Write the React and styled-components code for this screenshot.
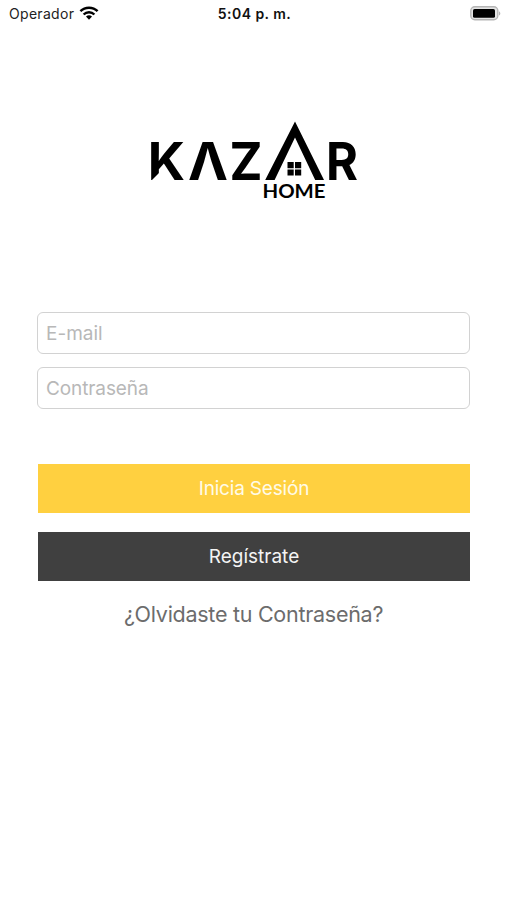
import React from 'react'
import styled, { createGlobalStyle } from 'styled-components'

const colors = {
    yellow: '#ffd040',
    dark: '#404040',
    border: '#d2d2d2',
    placeholder: '#b8b8b8',
    link: '#6c6c6c',
}

const GlobalStyle = createGlobalStyle`
    * {
        box-sizing: border-box;
    }
    body {
        margin: 0;
        background: #fff;
        font-family: Inter, 'Liberation Sans', sans-serif;
    }
`

const Screen = styled.main`
    display: flex;
    flex-direction: column;
    height: 900px;
`

const StatusBar = styled.header`
    display: grid;
    grid-template-columns: 1fr auto 1fr;
    align-items: center;
    height: 26px;
    padding: 0 6px 0 9px;
    color: #111;
    font-size: 14px;
`

const Carrier = styled.div`
    display: flex;
    align-items: center;
    gap: 5px;
    color: #222;
    letter-spacing: 0.3px;
`

const Time = styled.div`
    margin-right: 1px;
    font-weight: 600;
    letter-spacing: 0.45px;
`

const BatterySlot = styled.div`
    display: flex;
    justify-content: flex-end;
`

const LogoArea = styled.div`
    display: flex;
    justify-content: center;
    height: 286px;
    padding-top: 90px;
`

const LogoText = styled.text`
    font-family: ${({ family = 'Inter' }) => family}, sans-serif;
    font-weight: ${({ weight = 700 }) => weight};
    font-size: ${({ size = 52.5 }) => size}px;
`

const Form = styled.form`
    display: flex;
    flex-direction: column;
    padding: 0 37px;
`

const Field = styled.input`
    height: 42px;
    margin-bottom: 13px;
    padding: 0 8px;
    border: 1.5px solid ${colors.border};
    border-radius: 6px;
    outline: none;
    background: #fff;
    font-family: inherit;
    font-size: 19px;
    letter-spacing: ${({ $spacing = 0 }) => $spacing}px;
    &::placeholder {
        color: ${colors.placeholder};
        opacity: 1;
    }
`

const Button = styled.button`
    height: 49px;
    margin: ${({ $top }) => $top}px 0 0 1px;
    padding: 0;
    border: 0;
    background: ${({ $background }) => $background};
    color: ${({ $color }) => $color};
    font-family: inherit;
    font-size: 19px;
    letter-spacing: ${({ $spacing = 0 }) => $spacing}px;
`

const ForgotLink = styled.a`
    margin-top: 19px;
    color: ${colors.link};
    font-size: 21.5px;
    line-height: 28px;
    text-align: center;
    letter-spacing: -0.27px;
`

const Wifi = () => (
    <svg width="20" height="14" viewBox="0 0 20 14" fill="none" stroke="#000" strokeWidth="2.4">
        <path d="M1.4 5.2a12.3 12.3 0 0 1 17.2 0" />
        <path d="M4.6 8.5a7.7 7.7 0 0 1 10.8 0" />
        <path d="M7 10.6a4.3 4.3 0 0 1 6 0L10 13.7z" fill="#000" stroke="none" />
    </svg>
)

const Battery = () => (
    <svg width="31" height="15" viewBox="0 0 31 15">
        <rect x="0.8" y="0.8" width="27" height="13" rx="4" fill="#e4e4e4" stroke="#b5b5b5" strokeWidth="1.4" />
        <rect x="3" y="3" width="22" height="8.8" rx="1.6" fill="#000" />
        <path d="M29 5.2c1.8.7 1.8 3.7 0 4.4z" fill="#b5b5b5" />
    </svg>
)

const Logo = () => (
    <svg width="219" height="94" viewBox="144 116 219 94" fill="#000">
        <LogoText x="147.7" y="180" textLength="37.3" lengthAdjust="spacingAndGlyphs">K</LogoText>
        <LogoText x="188" y="180" textLength="40" lengthAdjust="spacingAndGlyphs">Λ</LogoText>
        <LogoText x="229.5" y="180" textLength="33" lengthAdjust="spacingAndGlyphs">Z</LogoText>
        {/* slanted cut at the foot of the K */}
        <path d="M151 181l9-9v9z" fill="#fff" />
        {/* the roof stands in for the second A */}
        <path d="M295 121.5L324 180h-8.8L295 137.5 274.6 180h-9.4z" />
        <path d="M287.5 162h6.2v6.2h-6.2zM295 162h6.2v6.2H295zM287.5 169.4h6.2v6.2h-6.2zM295 169.4h6.2v6.2H295z" />
        <LogoText x="326" y="180" textLength="32" lengthAdjust="spacingAndGlyphs">R</LogoText>
        <LogoText x="262.5" y="198" textLength="63" lengthAdjust="spacingAndGlyphs" family="Lato" size={19.5}>HOME</LogoText>
    </svg>
)

const App = () => (
    <Screen>
        <GlobalStyle />
        <StatusBar>
            <Carrier>Operador <Wifi /></Carrier>
            <Time>5:04 p. m.</Time>
            <BatterySlot><Battery /></BatterySlot>
        </StatusBar>
        <LogoArea>
            <Logo />
        </LogoArea>
        <Form>
            <Field type="email" placeholder="E-mail" />
            <Field type="password" placeholder="Contraseña" $spacing={-0.1} />
            <Button type="button" $top={42} $background={colors.yellow} $color="#fffbe8" $spacing={-0.18}>Inicia Sesión</Button>
            <Button type="button" $top={19} $background={colors.dark} $color="#f4f4f4">Regístrate</Button>
            <ForgotLink>¿Olvidaste tu Contraseña?</ForgotLink>
        </Form>
    </Screen>
)

export default App
